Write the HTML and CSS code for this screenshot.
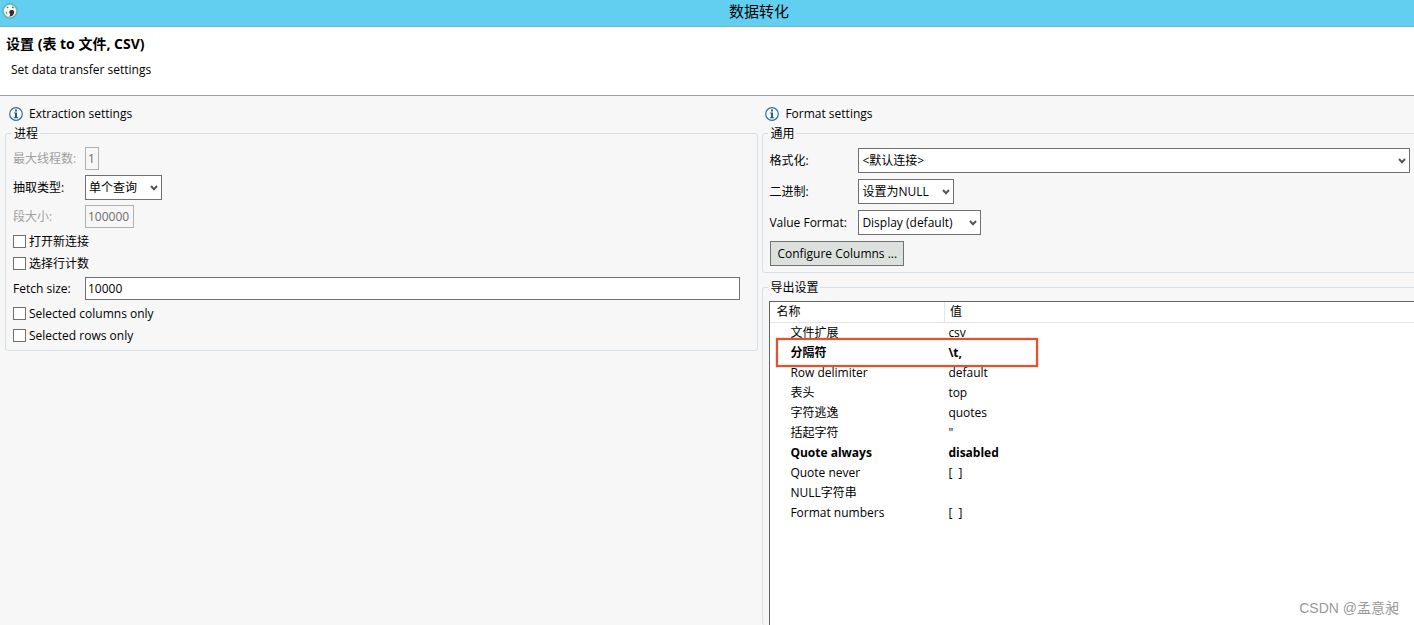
FILE: index.html
```html
<!DOCTYPE html>
<html lang="zh-CN">
<head>
<meta charset="utf-8">
<title>数据转化</title>
<link rel="stylesheet" href="styles.css">
</head>
<body>
<header class="titlebar">
  <svg class="app-icon" viewBox="0 0 16 16" aria-hidden="true">
    <circle cx="8" cy="8" r="7.200" fill="#b5dcd6" stroke="#5fb3b4" stroke-width="1.400"/>
    <circle cx="8" cy="8" r="5.800" fill="#fbfaf6"/>
    <path d="M4.600 4.400 6 3.400l.6 1L5.200 5.600zM10 3.200l2 1.200-.6 1.200-1.600-1z" fill="#6a5a52"/>
    <path d="M8 7.400c1.400-1 3.800-.4 4.200 1 .2 1.600-.6 2.200-1.200 3.600-.8 1.200-2.400 1.600-3.800 1.400.8-1 1.200-1.600.8-2.600-.8-.8-1-2.400 0-3.400z" fill="#3a2b28"/>
    <path d="M3.600 8.200 5 9l.4 2.600-1.200-.8z" fill="#8a8480"/>
  </svg>
  <h1 class="titlebar-text">数据转化</h1>
</header>
<section class="banner">
  <h2 class="banner-title">设置 (表 to 文件, CSV)</h2>
  <p class="banner-text">Set data transfer settings</p>
</section>
<main class="columns">
  <section class="column column-left">
    <h3 class="column-title">
      <svg class="info" viewBox="0 0 14 14" aria-hidden="true"><circle cx="7" cy="7" r="6.300" fill="#fff" stroke="#2d6ca2" stroke-width="1.200"/><path d="M6 2.600h2v1.800H6zM5 5.400h3v4.800h1.200v1H4.800v-1H6V6.400H5z" fill="#1f5c96"/></svg>
      Extraction settings
    </h3>
    <fieldset class="group">
      <legend>进程</legend>
      <div class="form">
        <div class="row row-text off"><label for="threads">最大线程数:</label><input class="field field-tiny" id="threads" type="text" value="1" disabled></div>
        <div class="row"><label for="extract">抽取类型:</label>
          <span class="combo combo-small"><select id="extract"><option>单个查询</option></select><svg class="chevron" viewBox="0 0 8 6" aria-hidden="true"><path d="M1 1l3 3.200L7 1"/></svg></span></div>
        <div class="row row-text off"><label for="segment">段大小:</label><input class="field field-short" id="segment" type="text" value="100000" disabled></div>
        <label class="check"><input type="checkbox">打开新连接</label>
        <label class="check"><input type="checkbox">选择行计数</label>
        <div class="row row-text"><label for="fetch">Fetch size:</label><input class="field field-full" id="fetch" type="text" value="10000"></div>
        <label class="check"><input type="checkbox">Selected columns only</label>
        <label class="check"><input type="checkbox">Selected rows only</label>
      </div>
    </fieldset>
  </section>
  <section class="column column-right">
    <h3 class="column-title">
      <svg class="info" viewBox="0 0 14 14" aria-hidden="true"><circle cx="7" cy="7" r="6.300" fill="#fff" stroke="#2d6ca2" stroke-width="1.200"/><path d="M6 2.600h2v1.800H6zM5 5.400h3v4.800h1.200v1H4.800v-1H6V6.400H5z" fill="#1f5c96"/></svg>
      Format settings
    </h3>
    <fieldset class="group">
      <legend>通用</legend>
      <div class="form form-wide">
        <div class="row"><label for="format">格式化:</label>
          <span class="combo"><select id="format"><option>&lt;默认连接&gt;</option></select><svg class="chevron" viewBox="0 0 8 6" aria-hidden="true"><path d="M1 1l3 3.200L7 1"/></svg></span></div>
        <div class="row"><label for="binary">二进制:</label>
          <span class="combo combo-medium"><select id="binary"><option>设置为NULL</option></select><svg class="chevron" viewBox="0 0 8 6" aria-hidden="true"><path d="M1 1l3 3.200L7 1"/></svg></span></div>
        <div class="row"><label for="value">Value Format:</label>
          <span class="combo combo-large"><select id="value"><option>Display (default)</option></select><svg class="chevron" viewBox="0 0 8 6" aria-hidden="true"><path d="M1 1l3 3.200L7 1"/></svg></span></div>
        <button class="button" type="button">Configure Columns ...</button>
      </div>
    </fieldset>
    <fieldset class="group group-fill">
      <legend>导出设置</legend>
      <div class="sheet">
        <table class="props">
          <thead><tr><th class="name">名称</th><th>值</th></tr></thead>
          <tbody>
            <tr><td>文件扩展</td><td>csv</td></tr>
            <tr class="changed"><td>分隔符</td><td>\t,</td></tr>
            <tr><td>Row delimiter</td><td>default</td></tr>
            <tr><td>表头</td><td>top</td></tr>
            <tr><td>字符逃逸</td><td>quotes</td></tr>
            <tr><td>括起字符</td><td>"</td></tr>
            <tr class="changed"><td>Quote always</td><td>disabled</td></tr>
            <tr><td>Quote never</td><td class="blank">[  ]</td></tr>
            <tr><td>NULL字符串</td><td></td></tr>
            <tr><td>Format numbers</td><td class="blank">[  ]</td></tr>
          </tbody>
        </table>
        <div class="marker"></div>
      </div>
    </fieldset>
  </section>
</main>
<div class="watermark">CSDN @孟意昶</div>
</body>
</html>
```

FILE: styles.css
```css
* { box-sizing: border-box; }

body {
  margin: 0;
  height: 100vh;
  display: flex;
  flex-direction: column;
  overflow: hidden;
  background: #f7f7f7;
  color: #000;
  font: 12px/16px "Open Sans", "Noto Sans CJK SC", sans-serif;
}

h1, h2, h3, p { margin: 0; font-size: inherit; font-weight: 400; }

input, select, button { font: inherit; color: inherit; }

.titlebar {
  position: relative;
  height: 27px;
  display: flex;
  align-items: center;
  justify-content: center;
  padding-left: 104px;
  background: #63cff0;
  border-bottom: 1px solid #73b3ca;
}

.app-icon {
  position: absolute;
  left: 2px;
  top: 3px;
  width: 16px;
  height: 16px;
}

.titlebar-text { font-size: 15px; line-height: 22px; padding-bottom: 4px; }

.banner {
  height: 69px;
  padding: 8px 6px;
  background: #fff;
  border-bottom: 1px solid #a0a0a0;
}

.banner-title { font-size: 14px; font-weight: 700; line-height: 18px; }
.banner-text { padding: 8px 5px; line-height: 18px; }

.columns {
  flex: 1;
  min-height: 0;
  display: grid;
  grid-template-columns: minmax(0, 7fr) minmax(0, 6fr);
}

.column {
  display: flex;
  flex-direction: column;
  min-height: 0;
  padding-top: 9px;
}

.column-left { padding-left: 5px; padding-right: 3px; }
.column-right { padding-left: 1px; overflow: hidden; }

.column-title {
  display: flex;
  align-items: center;
  gap: 6px;
  height: 17px;
  margin-bottom: 3px;
  padding-left: 3px;
}

.column-left .column-title { padding-left: 4px; }

.info { width: 14px; height: 14px; }

.group {
  min-width: 0;
  margin: 0;
  padding: 6px 7px;
  border: 1px solid #d5dfe5;
  border-radius: 3px;
}

.column-right .group {
  margin-right: -4px;
  padding-left: 6px;
}

.group legend { height: 16px; padding: 0 2px; margin-left: -1px; line-height: 18px; }

.group-fill {
  flex: 1;
  min-height: 0;
  display: flex;
  flex-direction: column;
  margin-top: 6px;
  padding-right: 0;
  padding-bottom: 0;
  border-bottom: 0;
}

.form { display: flex; flex-direction: column; gap: 5px; }
.form-wide { gap: 6px; padding-top: 1px; }

.row {
  display: grid;
  grid-template-columns: 72px minmax(0, 1fr);
  align-items: center;
  height: 25px;
}

.form-wide .row { grid-template-columns: 89px minmax(0, 1fr); }
.row-text { height: 23px; }
.off { color: #a0a0a0; }

.field {
  height: 23px;
  padding: 0 2px;
  border: 1px solid #707070;
  border-radius: 0;
  background: #fff;
}

.field:disabled { color: #6d6d6d; background: #f7f7f7; border-color: #adb2b5; }
.field-tiny { width: 14px; }
.field-short { width: 49px; }
.field-full { width: calc(100% - 10px); }

.check { display: flex; align-items: center; gap: 3px; height: 17px; }

.check input {
  appearance: none;
  width: 13px;
  height: 13px;
  margin: 0;
  border: 1px solid #707070;
  background: #fff;
}

.combo { position: relative; height: 25px; }

.combo select {
  appearance: none;
  width: 100%;
  height: 25px;
  padding: 0 3px;
  border: 1px solid #707070;
  border-radius: 0;
  background: #fff;
}

.chevron {
  position: absolute;
  right: 4px;
  top: 10px;
  width: 8px;
  height: 6px;
  fill: none;
  stroke: #555;
  stroke-width: 2;
  pointer-events: none;
}

.combo-small { width: 77px; }
.combo-medium { width: 96px; }
.combo-large { width: 123px; }

.button {
  align-self: flex-start;
  height: 25px;
  margin-left: 1px;
  padding: 0 6px;
  border: 1px solid #707070;
  border-radius: 0;
  background: #dde1de;
}

.sheet {
  position: relative;
  flex: 1;
  min-height: 0;
  background: #fff;
  border-top: 1px solid #646464;
  border-left: 1px solid #646464;
}

.props { width: 100%; border-collapse: collapse; table-layout: fixed; }
.props th, .props td { height: 20px; padding: 0 4px; text-align: left; font-weight: 400; line-height: 16px; }
.props th { height: 20px; padding-left: 5px; border-bottom: 1px solid #e5e5e5; line-height: 20px; }
.props .name { width: 174px; padding-left: 6px; border-right: 1px solid #e5e5e5; }
.props td:first-child { padding-left: 20px; }
.props .changed td { font-weight: 700; }
.props .blank { white-space: pre; }

.marker {
  position: absolute;
  left: 6px;
  top: 36px;
  width: 262px;
  height: 29px;
  border: 2px solid #e0532c;
  box-shadow: 0 0 1px #e0532c, inset 0 0 1px #e0532c;
}

.watermark {
  position: absolute;
  right: 15px;
  bottom: 7px;
  color: #999;
  font: 14px/20px "Liberation Sans", "Noto Sans CJK SC", sans-serif;
}
```
